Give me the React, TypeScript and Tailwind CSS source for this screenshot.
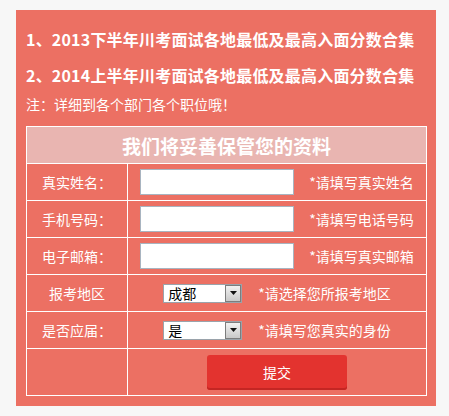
import { useState } from "react";

const font = { fontFamily: '"Noto Sans CJK SC", "Noto Sans", sans-serif' };

function FakeSelect({ value, options }: { value: string; options: string[] }) {
  const [v, setV] = useState(value);
  return (
    <div className="relative flex h-[19px] w-[79px] items-center border border-[#9aa3ab] bg-white pl-[4px] text-[14px] leading-none text-black">
      <span>{v}</span>
      <select
        value={v}
        onChange={(e) => setV(e.target.value)}
        className="absolute inset-0 opacity-0"
      >
        {options.map((o) => (
          <option key={o}>{o}</option>
        ))}
      </select>
      <div className="pointer-events-none absolute right-0 top-0 flex h-[17px] w-[16px] items-center justify-center border border-[#7d7d7d] bg-gradient-to-b from-[#f2f2f2] to-[#c9c9c9]">
        <svg width="7" height="4" viewBox="0 0 7 4">
          <path d="M0 0h7L3.5 4z" fill="#111" />
        </svg>
      </div>
    </div>
  );
}

export default function App() {
  const rows = [
    { label: "真实姓名：", hint: "*请填写真实姓名" },
    { label: "手机号码：", hint: "*请填写电话号码" },
    { label: "电子邮箱：", hint: "*请填写真实邮箱" },
  ];

  return (
    <div className="min-h-[416px] bg-[#f7f7f7] pt-[10px]" style={font}>
      <div className="ml-[16px] w-[420px] bg-[#ec7063] px-[10px] pb-[10px] pt-[11px] text-white">
        <p className="whitespace-nowrap text-[16px] font-bold leading-[36px] tracking-[0.2px]">1、2013下半年川考面试各地最低及最高入面分数合集</p>
        <p className="whitespace-nowrap text-[16px] font-bold leading-[36px] tracking-[0.2px]">2、2014上半年川考面试各地最低及最高入面分数合集</p>
        <p className="mb-[11px] text-[14px] leading-[22px]">注：详细到各个部门各个职位哦！</p>

        <table className="w-[401px] border-collapse border border-white text-[14px] leading-none">
          <tbody>
            <tr className="h-[37px] bg-[#e9b5b1]">
              <td colSpan={2} className="border border-white p-0 text-center text-[19px] font-bold">
                我们将妥善保管您的资料
              </td>
            </tr>
            {rows.map((r) => (
              <tr key={r.label} className="h-[37px]">
                <td className="w-[101px] border border-white p-0 text-center">{r.label}</td>
                <td className="border border-white p-0">
                  <div className="flex items-center justify-center gap-[15px]">
                    <input className="h-[26px] w-[154px] border border-[#a8b4c0] bg-white px-1 text-black outline-none" />
                    <span className="whitespace-nowrap">{r.hint}</span>
                  </div>
                </td>
              </tr>
            ))}
            <tr className="h-[37px]">
              <td className="border border-white p-0 text-center">报考地区</td>
              <td className="border border-white p-0">
                <div className="flex items-center justify-center gap-[16px]">
                  <FakeSelect value="成都" options={["成都", "绵阳", "德阳", "乐山"]} />
                  <span className="whitespace-nowrap">*请选择您所报考地区</span>
                </div>
              </td>
            </tr>
            <tr className="h-[37px]">
              <td className="border border-white p-0 text-center">是否应届：</td>
              <td className="border border-white p-0">
                <div className="flex items-center justify-center gap-[16px]">
                  <FakeSelect value="是" options={["是", "否"]} />
                  <span className="whitespace-nowrap">*请填写您真实的身份</span>
                </div>
              </td>
            </tr>
            <tr className="h-[47px]">
              <td className="border border-white p-0"></td>
              <td className="border border-white p-0">
                <div className="flex justify-center">
                  <button className="h-[35px] w-[140px] rounded-[3px] bg-[#e3332f] text-[14px] text-white shadow-[inset_0_-2px_0_#c42623]">
                    提交
                  </button>
                </div>
              </td>
            </tr>
          </tbody>
        </table>
      </div>
    </div>
  );
}
